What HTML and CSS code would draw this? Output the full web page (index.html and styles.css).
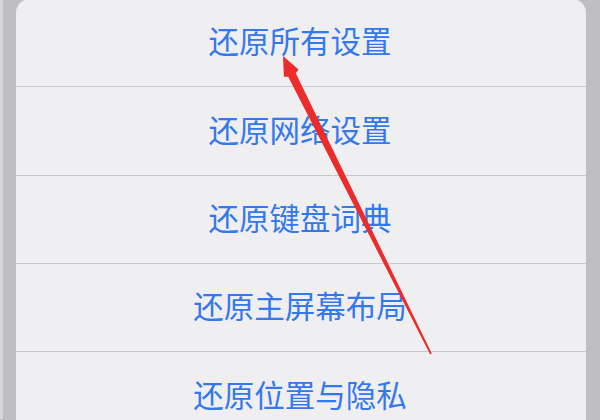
FILE: index.html
```html
<!DOCTYPE html>
<html lang="zh-CN">
<head>
<meta charset="utf-8">
<title>还原</title>
<link rel="stylesheet" href="styles.css">
</head>
<body>
<div class="screen">
  <div class="sheet">
    <div class="row">还原所有设置</div>
    <div class="row">还原网络设置</div>
    <div class="row">还原键盘词典</div>
    <div class="row">还原主屏幕布局</div>
    <div class="row">还原位置与隐私</div>
  </div>
  <svg class="arrow" width="600" height="420" viewBox="0 0 600 420" xmlns="http://www.w3.org/2000/svg">
    <polygon fill="#ec2b2b" points="283,57 298.5,70.5 295.8,74.2 431.8,354.6 430.2,355.4 288.2,77.8 283.9,77.7"/>
  </svg>
</div>
</body>
</html>
```

FILE: styles.css
```css
html, body {
  margin: 0;
  padding: 0;
}
body {
  width: 600px;
  height: 420px;
  overflow: hidden;
  background: #bebec3;
  font-family: "Noto Sans CJK SC", "Noto Sans", sans-serif;
}
.screen {
  position: relative;
  width: 600px;
  height: 420px;
  box-sizing: border-box;
  padding: 0 14px 0 13px;
  border-left: 3px solid #d8d8db;
}
.sheet {
  margin-top: -1px;
  background: #efeff2;
  border-radius: 14px 14px 0 0;
  overflow: hidden;
  height: 440px;
}
.row {
  height: 87.3px;
  box-sizing: border-box;
  padding: 0 2px 4px 0;
  border-bottom: 1px solid #c8c8cc;
  display: flex;
  align-items: center;
  justify-content: center;
  color: #3478ee;
  font-size: 30.5px;
  line-height: 1;
}
.row {
  height: 88.3px;
}
.arrow {
  position: absolute;
  left: -3px;
  top: 0;
  pointer-events: none;
}
```
